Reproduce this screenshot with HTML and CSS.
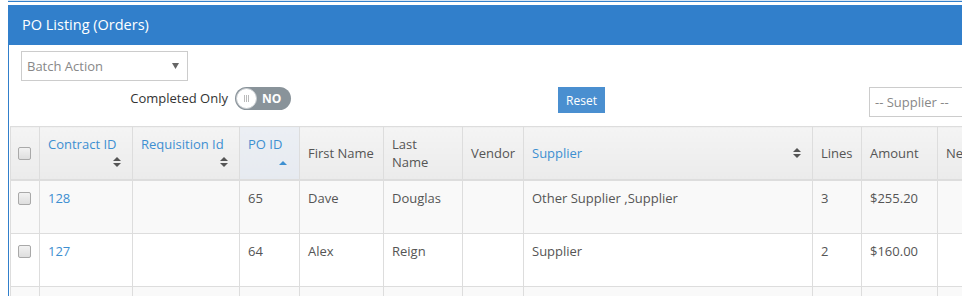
FILE: index.html
```html
<!DOCTYPE html>
<html>
<head>
<meta charset="utf-8">
<link rel="stylesheet" href="styles.css">
</head>
<body>
<div class="page">
  <div class="topline"></div>
  <div class="panel">
    <div class="panel-heading">PO Listing (Orders)</div>
    <div class="panel-body">
      <div class="batch-row">
        <div class="select batch">
          <span>Batch Action</span>
          <svg class="caret" width="7" height="6" viewBox="0 0 7 6"><path d="M0 0H7L3.5 6Z" fill="#666"/></svg>
        </div>
      </div>
      <div class="filter-row">
        <div class="completed">
          <span class="label">Completed Only</span>
          <span class="toggle"><span class="knob"><span class="bars"></span></span><span class="toggle-text">NO</span></span>
        </div>
        <button class="btn-reset">Reset</button>
        <div class="select supplier"><span>-- Supplier --</span></div>
      </div>
      <div class="table-wrap">
        <table class="grid">
          <colgroup>
            <col style="width:29px"><col style="width:93px"><col style="width:107px"><col style="width:60px"><col style="width:84px"><col style="width:79px"><col style="width:61px"><col style="width:289px"><col style="width:49px"><col style="width:76px"><col style="width:120px">
          </colgroup>
          <thead>
            <tr>
              <th class="chk"><span class="cb"></span></th>
              <th class="sortable"><div class="hcell"><a>Contract ID</a><svg class="sort" width="8" height="10" viewBox="0 0 8 10"><path d="M0 4L4 0L8 4Z M0 6H8L4 10Z" fill="#555"/></svg></div></th>
              <th class="sortable"><div class="hcell"><a>Requisition Id</a><svg class="sort" width="8" height="10" viewBox="0 0 8 10"><path d="M0 4L4 0L8 4Z M0 6H8L4 10Z" fill="#555"/></svg></div></th>
              <th class="sortable sorted"><div class="hcell"><a>PO ID</a><svg class="sort asc" width="8" height="4" viewBox="0 0 8 4"><path d="M0 4L4 0L8 4Z" fill="#3d8fd1"/></svg></div></th>
              <th>First Name</th>
              <th>Last<br>Name</th>
              <th>Vendor</th>
              <th class="sortable"><div class="hrow"><a>Supplier</a><svg class="sort" width="8" height="10" viewBox="0 0 8 10"><path d="M0 4L4 0L8 4Z M0 6H8L4 10Z" fill="#555"/></svg></div></th>
              <th>Lines</th>
              <th>Amount</th>
              <th>Net Amount</th>
            </tr>
          </thead>
          <tbody>
            <tr class="odd">
              <td class="chk"><span class="cb"></span></td>
              <td><a>128</a></td>
              <td></td>
              <td>65</td>
              <td>Dave</td>
              <td>Douglas</td>
              <td></td>
              <td>Other Supplier ,Supplier</td>
              <td>3</td>
              <td>$255.20</td>
              <td></td>
            </tr>
            <tr>
              <td class="chk"><span class="cb"></span></td>
              <td><a>127</a></td>
              <td></td>
              <td>64</td>
              <td>Alex</td>
              <td>Reign</td>
              <td></td>
              <td>Supplier</td>
              <td>2</td>
              <td>$160.00</td>
              <td></td>
            </tr>
            <tr class="odd">
              <td class="chk"></td>
              <td></td>
              <td></td>
              <td></td>
              <td></td>
              <td></td>
              <td></td>
              <td></td>
              <td></td>
              <td></td>
              <td></td>
            </tr>
          </tbody>
        </table>
      </div>
    </div>
  </div>
</div>
</body>
</html>
```

FILE: styles.css
```css
html, body {
  margin: 0;
  padding: 0;
  background: #fff;
  overflow: hidden;
}
body {
  font-family: "Open Sans", "Liberation Sans", sans-serif;
  font-size: 13px;
  line-height: 18px;
  color: #555;
}
.page {
  margin-left: 8px;
  width: 1100px;
}
.topline {
  height: 1px;
  border-top: 1px solid #d6e4f2;
  background: #317fcb;
  margin-bottom: 3px;
}
.panel {
  border-left: 1px solid #317fcb;
  background: #fff;
  min-height: 300px;
}
.panel-heading {
  background: #317fcb;
  color: #fff;
  height: 40px;
  line-height: 40px;
  padding-left: 13px;
  font-size: 14.5px;
}
.batch-row {
  padding: 6px 0 0 12px;
}
.select {
  box-sizing: border-box;
  height: 30px;
  border: 1px solid #ccc;
  background: #fff;
  color: #888;
  display: flex;
  align-items: center;
  padding-left: 5px;
}
.batch {
  width: 167px;
  justify-content: space-between;
  padding-right: 8px;
}
.caret { display: block; }
.filter-row {
  display: flex;
  align-items: flex-start;
  margin-top: 6px;
}
.completed {
  width: 282px;
  display: flex;
  justify-content: flex-end;
  align-items: center;
  gap: 7px;
  height: 23px;
}
.completed .label { color: #333; margin-top: -2px; }
.toggle {
  width: 56px;
  height: 23px;
  border-radius: 12px;
  background: #89939a;
  display: flex;
  align-items: center;
  box-sizing: border-box;
  padding-left: 1px;
}
.knob {
  width: 21px;
  height: 21px;
  border-radius: 50%;
  background: #fff;
  box-sizing: border-box;
  border: 1px solid #c9cdd0;
  display: flex;
  align-items: center;
  justify-content: center;
}
.bars {
  width: 5px;
  height: 7px;
  border-left: 1px solid #bbb;
  border-right: 1px solid #bbb;
  box-sizing: border-box;
  background: linear-gradient(90deg, transparent 1px, #bbb 1px, #bbb 2px, transparent 2px);
}
.toggle-text {
  color: #fff;
  font-weight: 700;
  font-size: 12px;
  margin-left: 5px;
}
.btn-reset {
  margin-left: 267px;
  width: 47px;
  height: 26px;
  border: 0;
  background: #4a8fd0;
  color: #fff;
  font-family: "Open Sans", "Liberation Sans", sans-serif;
  font-size: 12px;
  padding: 0;
}
.supplier {
  margin-left: 264px;
  width: 160px;
}
.table-wrap {
  margin-top: 9px;
  padding-left: 1px;
}
.grid {
  border-collapse: collapse;
  table-layout: fixed;
  width: 1047px;
}
.grid a { color: #3d8fd1; text-decoration: none; }
.grid th {
  text-align: left;
  font-weight: 400;
  color: #555;
  background: linear-gradient(#f4f4f4, #ebebeb);
  border: 1px solid #ddd;
  border-bottom: 2px solid #ddd;
  padding: 8px;
  vertical-align: middle;
  white-space: nowrap;
}
.grid th.sorted { background: linear-gradient(#eceff4, #e6eaf0); }
.hcell {
  display: flex;
  flex-direction: column;
}
.hcell .sort {
  align-self: flex-end;
  margin: 4px 3px 4px 0;
}
.hcell .sort.asc { margin: 8px 4px 6px 0; }
.hrow {
  display: flex;
  justify-content: space-between;
  align-items: center;
}
.hrow .sort { margin-right: 3px; }
.grid td {
  border: 1px solid #ddd;
  padding: 8px 8px 26px;
  vertical-align: top;
  white-space: nowrap;
  overflow: hidden;
}
.grid tr.odd td { background: #f9f9f9; }
.grid .chk { padding-left: 7px; padding-right: 0; }
.cb {
  display: block;
  width: 13px;
  height: 13px;
  box-sizing: border-box;
  border: 1px solid #a9a9a9;
  border-radius: 2px;
  background: linear-gradient(#f2f2f2, #dedede);
}
td.chk .cb { margin-top: 3px; }
```
